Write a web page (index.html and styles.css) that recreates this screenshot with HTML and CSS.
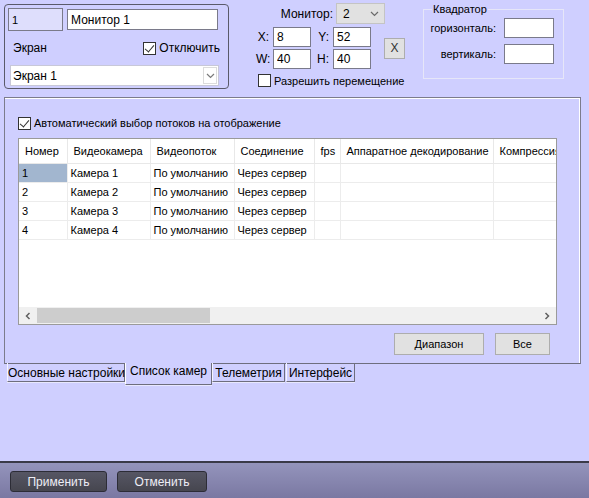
FILE: index.html
```html
<!DOCTYPE html>
<html lang="ru">
<head>
    <meta charset="UTF-8" />
    <title>Монитор 1</title>
    <link rel="stylesheet" href="styles.css">
</head>
<body>
    <div class="window">
        <div class="top">
            <div class="screen-box">
                <div class="row">
                    <input type="text" class="field field-id" value="1" />
                    <input type="text" class="field field-name" value="Монитор 1" />
                </div>
                <div class="row row-screen">
                    <span class="label">Экран</span>
                    <label class="check"><span class="box checked"></span>Отключить</label>
                </div>
                <div class="select select-screen">
                    <span>Экран 1</span>
                    <span class="arrow"><svg width="9" height="6" viewBox="0 0 9 6"><path d="M1 1l3.5 3.5L8 1" fill="none" stroke="#7a7a7a" stroke-width="1.2"/></svg></span>
                </div>
            </div>

            <div class="position">
                <div class="monitor-row">
                    <span class="label">Монитор:</span>
                    <div class="select select-monitor">
                        <span>2</span>
                        <svg width="9" height="6" viewBox="0 0 9 6"><path d="M1 1l3.5 3.5L8 1" fill="none" stroke="#6a6a6a" stroke-width="1.2"/></svg>
                    </div>
                </div>
                <div class="coords">
                    <div class="coord-grid">
                        <span class="coord-label">X:</span><input type="text" class="field coord" value="8" />
                        <span class="coord-label">Y:</span><input type="text" class="field coord" value="52" />
                        <span class="coord-label">W:</span><input type="text" class="field coord" value="40" />
                        <span class="coord-label">H:</span><input type="text" class="field coord" value="40" />
                    </div>
                    <button class="btn btn-x">X</button>
                </div>
                <label class="check check-move"><span class="box"></span>Разрешить перемещение</label>
            </div>

            <fieldset class="quad">
                <legend>Квадратор</legend>
                <div class="quad-row">
                    <span class="label">горизонталь:</span>
                    <input type="text" class="field quad-field" />
                </div>
                <div class="quad-row">
                    <span class="label">вертикаль:</span>
                    <input type="text" class="field quad-field" />
                </div>
            </fieldset>
        </div>

        <div class="panel">
            <label class="check check-auto"><span class="box checked"></span>Автоматический выбор потоков на отображение</label>

            <div class="grid-box">
                <div class="grid-area">
                    <table class="cams">
                        <thead>
                            <tr>
                                <th class="c-num">Номер</th>
                                <th class="c-cam">Видеокамера</th>
                                <th class="c-stream">Видеопоток</th>
                                <th class="c-conn">Соединение</th>
                                <th class="c-fps">fps</th>
                                <th class="c-hw">Аппаратное декодирование</th>
                                <th class="c-comp">Компрессия</th>
                            </tr>
                        </thead>
                        <tbody>
                            <tr>
                                <td class="selected">1</td><td>Камера 1</td><td>По умолчанию</td><td>Через сервер</td><td></td><td></td><td></td>
                            </tr>
                            <tr>
                                <td>2</td><td>Камера 2</td><td>По умолчанию</td><td>Через сервер</td><td></td><td></td><td></td>
                            </tr>
                            <tr>
                                <td>3</td><td>Камера 3</td><td>По умолчанию</td><td>Через сервер</td><td></td><td></td><td></td>
                            </tr>
                            <tr>
                                <td>4</td><td>Камера 4</td><td>По умолчанию</td><td>Через сервер</td><td></td><td></td><td></td>
                            </tr>
                        </tbody>
                    </table>
                </div>
                <div class="hscroll">
                    <span class="scroll-arrow"><svg width="6" height="8" viewBox="0 0 6 8"><path d="M4.5 1L1.5 4l3 3" fill="none" stroke="#606060" stroke-width="1.5"/></svg></span>
                    <span class="thumb"></span>
                    <span class="track"></span>
                    <span class="scroll-arrow"><svg width="6" height="8" viewBox="0 0 6 8"><path d="M1.5 1l3 3-3 3" fill="none" stroke="#606060" stroke-width="1.5"/></svg></span>
                </div>
            </div>

            <div class="panel-buttons">
                <button class="btn btn-range">Диапазон</button>
                <button class="btn btn-all">Все</button>
            </div>
        </div>

        <div class="tabs">
            <span class="tab tab-main">Основные настройки</span>
            <span class="tab tab-active">Список камер</span>
            <span class="tab tab-tele">Телеметрия</span>
            <span class="tab tab-ui">Интерфейс</span>
        </div>

        <div class="spacer"></div>

        <div class="footer">
            <button class="dark-btn btn-apply">Применить</button>
            <button class="dark-btn btn-cancel">Отменить</button>
        </div>
    </div>
</body>
</html>
```

FILE: styles.css
```css
* {
    margin: 0; padding: 0; box-sizing: border-box;
}
body {
    background: #cfcfff;
    font-family: 'Liberation Sans', Arial, sans-serif;
    font-size: 11px;
    color: #000;
}
.window {
    width: 589px;
    height: 498px;
    display: flex;
    flex-direction: column;
    overflow: hidden;
}
input, button {
    font-family: inherit;
    font-size: 11px;
}

/* --- top area --- */
.top {
    height: 97px;
    display: flex;
    align-items: flex-start;
}
.screen-box {
    margin: 4px 0 0 4px;
    width: 225px;
    height: 85px;
    border: 1px solid #5a5a6a;
    border-radius: 4px;
    padding: 3px 0 0 3px;
}
.row {
    display: flex;
    align-items: center;
}
.field {
    height: 21px;
    border: 1px solid #7a7a8a;
    background: #fff;
    padding: 0 3px;
    outline: none;
    color: #000;
}
.field-id {
    width: 55px;
    height: 23px;
    background: #dedefc;
}
.field-name {
    width: 151px;
    margin-left: 4px;
    font-size: 12px;
}
.row-screen {
    height: 31px;
    padding: 3px 0 0 5px;
    justify-content: space-between;
    width: 212px;
    font-size: 12px;
}
.check {
    display: flex;
    align-items: center;
    white-space: nowrap;
}
.box {
    flex-shrink: 0;
    width: 13px;
    height: 13px;
    border: 1px solid #333;
    background: #fff;
    margin-right: 3px;
    position: relative;
}
.box.checked::after {
    content: "";
    position: absolute;
    left: 3px;
    top: 0px;
    width: 4px;
    height: 8px;
    border: solid #333;
    border-width: 0 1.5px 1.5px 0;
    transform: rotate(40deg);
}
.select {
    display: flex;
    align-items: center;
    justify-content: space-between;
}
.select-screen {
    margin: 3px 0 0 2px;
    width: 209px;
    height: 21px;
    background: #fff;
    border: 1px solid #c8c8d8;
    padding: 0 0 0 2px;
    font-size: 12px;
}
.select-screen .arrow {
    width: 14px;
    height: 17px;
    border: 1px solid #dcdcdc;
    margin-right: 1px;
    display: flex;
    align-items: center;
    justify-content: center;
}

.position {
    margin-left: 27px;
    width: 150px;
    font-size: 12px;
}
.position input, .position button {
    font-size: 12px;
}
.monitor-row {
    display: flex;
    align-items: center;
    justify-content: flex-end;
    margin-top: 3px;
    padding-right: 21px;
}
.select-monitor {
    margin-left: 3px;
    width: 49px;
    height: 21px;
    background: #e1e1e1;
    border: 1px solid #c4c4c4;
    padding: 0 5px 0 6px;
}
.coords {
    display: flex;
    align-items: center;
    margin-top: 3px;
}
.coord-grid {
    display: grid;
    grid-template-columns: 17px 38px 22px 38px;
    row-gap: 2px;
    align-items: center;
}
.coord-label {
    text-align: right;
    padding-right: 4px;
}
.coord {
    width: 38px;
    height: 20px;
}
.btn {
    background: #e1e1e1;
    border: 1px solid #adadad;
    color: #000;
}
.btn-x {
    width: 21px;
    height: 21px;
    margin-left: 13px;
    color: #333;
}
.check-move {
    margin: 5px 0 0 2px;
    font-size: 11px;
}

.quad {
    margin: 3px 0 0 17px;
    width: 141px;
    height: 76px;
    border: 1px solid #e6e6f8;
}
.quad legend {
    margin-left: 8px;
    padding: 0 1px;
}
.quad-row {
    display: flex;
    align-items: center;
    justify-content: flex-end;
    padding-right: 9px;
    margin-bottom: 6px;
}
.quad-row:first-of-type {
    margin-top: 3px;
}
.quad-field {
    width: 50px;
    height: 20px;
    margin-left: 8px;
}

/* --- main panel --- */
.panel {
    margin-left: 4px;
    width: 577px;
    height: 267px;
    border: 1px solid #7c7c8c;
    border-bottom-color: #6e6e7e;
    box-shadow: inset -1px 0 0 #fff, inset 0 1px 0 #fff;
    padding: 18px 0 0 13px;
}
.check-auto {
    height: 14px;
}
.grid-box {
    margin-top: 8px;
    width: 539px;
    height: 187px;
    border: 1px solid #9a9a9a;
    background: #fff;
    display: flex;
    flex-direction: column;
}
.grid-area {
    flex: 1;
    overflow: hidden;
}
.cams {
    border-collapse: collapse;
    table-layout: fixed;
    width: 600px;
    white-space: nowrap;
}
.cams th {
    height: 24px;
    font-weight: normal;
    text-align: left;
    padding-left: 6px;
    border-right: 1px solid #e8e8e8;
    border-bottom: 1px solid #e8e8e8;
    overflow: hidden;
}
.cams td {
    height: 19px;
    padding-left: 3px;
    border-right: 1px solid #ececec;
    border-bottom: 1px solid #ececec;
    overflow: hidden;
}
.cams td.selected {
    background: #a2b6cf;
}
.c-num { width: 48px; }
.c-cam { width: 83px; }
.c-stream { width: 84px; }
.c-conn { width: 80px; }
.c-fps { width: 26px; }
.c-hw { width: 153px; }
.c-comp { width: 126px; }

.hscroll {
    height: 17px;
    background: #f0f0f0;
    display: flex;
    align-items: center;
}
.scroll-arrow {
    width: 18px;
    height: 17px;
    display: flex;
    align-items: center;
    justify-content: center;
}
.thumb {
    width: 173px;
    height: 15px;
    background: #cdcdcd;
}
.track {
    flex: 1;
}
.panel-buttons {
    display: flex;
    margin: 8px 0 0 376px;
}
.btn-range {
    width: 90px;
    height: 22px;
}
.btn-all {
    width: 55px;
    height: 22px;
    margin-left: 11px;
}

/* --- tabs --- */
.tabs {
    display: flex;
    margin: -1px 0 0 7px;
    height: 24px;
    align-items: flex-start;
    white-space: nowrap;
    font-size: 12px;
}
.tab {
    height: 19px;
    padding-top: 3px;
    border-left: 1px solid #f4f4ff;
    border-right: 1px solid #6e6e7e;
    border-bottom: 1px solid #6e6e7e;
    box-shadow: 0 1px 0 #e8e8ff;
    text-align: center;
}
.tab-main { width: 118px; }
.tab-active {
    width: 87px;
    height: 22px;
    padding-top: 1px;
    background: #cfcfff;
    border-left: 1px solid #fff;
    border-right: 1px solid #6e6e7e;
    border-bottom: 1px solid #6e6e7e;
}
.tab-tele { width: 73px; }
.tab-ui { width: 69px; margin-left: 1px; }

.spacer {
    flex: 1;
}

/* --- footer --- */
.footer {
    height: 37px;
    border-top: 2px solid #3a3a48;
    background: linear-gradient(#9494bc, #7a78a2);
    display: flex;
    align-items: flex-start;
    padding: 8px 0 0 10px;
}
.dark-btn {
    height: 21px;
    border: 1px solid #2c2c36;
    border-radius: 3px;
    background: linear-gradient(#565664, #46464f);
    color: #eeeef6;
    font-size: 12px;
}
.btn-apply { width: 97px; }
.btn-cancel { width: 90px; margin-left: 10px; }
```
